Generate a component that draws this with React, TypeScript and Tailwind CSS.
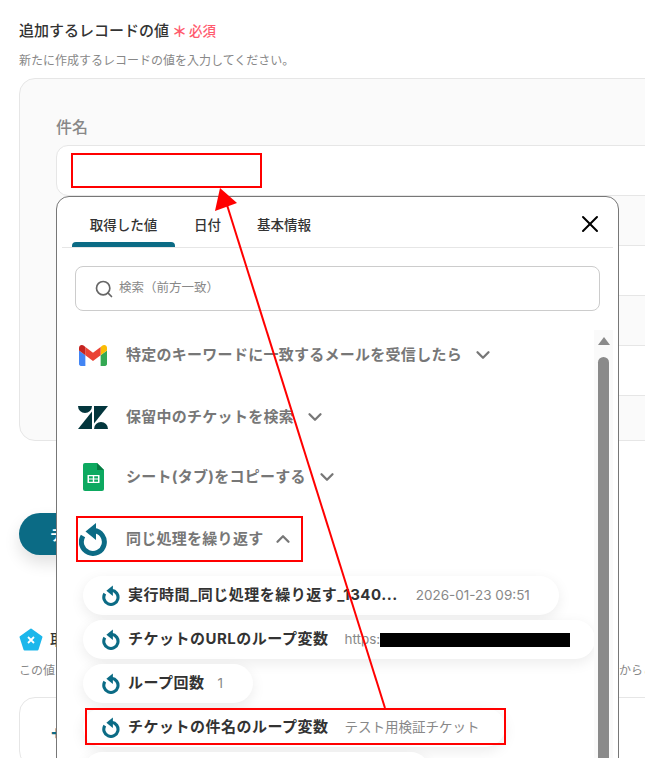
import React from 'react';
import { ChevronDown, ChevronUp, Search, X } from 'lucide-react';

const FONT = 'font-[Inter,"Noto_Sans_CJK_JP",sans-serif]';

const LoopIcon: React.FC<{ className?: string }> = ({ className }) => (
  <svg viewBox="0 0 28 34" className={className}>
    <path d="M15 8.500A11.500 11.500 0 1 1 4 14" fill="none" stroke="#0b6b85" strokeWidth="5" />
    <path d="M6.500 9.500 17 1v17z" fill="#0b6b85" />
  </svg>
);

const GmailIcon = () => (
  <svg viewBox="52 42 88 66" className="w-[28px] h-[21px]">
    <path fill="#4285f4" d="M58 108h14V74L52 59v43c0 3.32 2.69 6 6 6" />
    <path fill="#34a853" d="M120 108h14c3.32 0 6-2.69 6-6V59l-20 15" />
    <path fill="#fbbc04" d="M120 48v26l20-15v-8c0-7.42-8.47-11.65-14.4-7.2" />
    <path fill="#ea4335" d="M72 74V48l24 18 24-18v26L96 92" />
    <path fill="#c5221f" d="M52 51v8l20 15V48l-5.6-4.2c-5.94-4.45-14.4-.22-14.4 7.2" />
  </svg>
);

const ZendeskIcon = () => (
  <svg viewBox="0 0 30 23" className="w-[30px] h-[23px]">
    <path fill="#03363d" d="M0 0h14a7 7 0 0 1-14 0z" />
    <path fill="#03363d" d="M14 5.500V23H0z" />
    <path fill="#03363d" d="M16 0h14L16 17.500z" />
    <path fill="#03363d" d="M16 23a7 7 0 0 1 14 0z" />
  </svg>
);

const SheetsIcon = () => (
  <svg viewBox="0 0 21 28" className="w-[21px] h-[28px]">
    <path fill="#0da960" d="M2 0h12l7 7v19a2 2 0 0 1-2 2H2a2 2 0 0 1-2-2V2a2 2 0 0 1 2-2z" />
    <path fill="#067a42" d="M14 0l7 7h-7z" />
    <path fill="#fff" d="M4.500 12h12v8h-12zM6 13.300v2.100h3.800v-2.100zm5.200 0v2.100H15v-2.100zM6 16.600v2.100h3.800v-2.100zm5.200 0v2.100H15v-2.100z" fillRule="evenodd" />
  </svg>
);

const Group: React.FC<{
  icon: React.ReactNode;
  label: string;
  open?: boolean;
  className?: string;
}> = ({ icon, label, open, className }) => (
  <div className={`flex items-center h-[40px] ${className ?? ''}`}>
    <div className="w-[30px] flex justify-center">{icon}</div>
    <span className="ml-[18px] text-[15px] tracking-[0.27px] font-bold text-[#777777]">{label}</span>
    {open ? (
      <ChevronUp className="ml-[9px] w-[22px] h-[22px] text-[#777777]" strokeWidth={2.5} />
    ) : (
      <ChevronDown className="ml-[10px] w-[22px] h-[22px] text-[#777777]" strokeWidth={2.5} />
    )}
  </div>
);

const Pill: React.FC<{ label: string; value?: React.ReactNode; className: string }> = ({
  label,
  value,
  className,
}) => (
  <div
    className={`flex items-center h-[39px] pl-[19px] rounded-full bg-white shadow-[0_4px_14px_rgba(0,0,0,0.08)] ${className}`}
  >
    <LoopIcon className="w-[18px] h-[21px] shrink-0" />
    <span className="ml-[8px] text-[15px] tracking-[0.5px] font-bold text-[#333333] whitespace-nowrap">{label}</span>
    {value}
  </div>
);

const Annotations = () => (
  <>
    <div className="absolute left-[71px] top-[153px] w-[191px] h-[35px] border-2 border-[#ff0000]" />
    <div className="absolute left-[76px] top-[516px] w-[227px] h-[46px] border-2 border-[#ff0000]" />
    <div className="absolute left-[85px] top-[708px] w-[421px] h-[37px] border-2 border-[#ff0000]" />
    <svg className="absolute left-0 top-0 w-[645px] h-[758px] pointer-events-none" viewBox="0 0 645 758">
      <line x1="385" y1="708" x2="227" y2="205" stroke="#ff0000" strokeWidth="2" />
      <path d="M220 188 237 203 215 211z" fill="#ff0000" />
    </svg>
  </>
);

const App: React.FC = () => {
  return (
    <div className={`relative w-[645px] h-[758px] overflow-hidden bg-white ${FONT}`}>
      <div className="w-[900px] pl-[19px] pt-[21px]">
        <div className="flex items-center h-[20px]">
          <span className="text-[15px] font-medium text-[#333333]">追加するレコードの値</span>
          <span className="ml-[3px] text-[15px] font-bold leading-none text-[#ff5a6e]">＊</span>
          <span className="ml-[2px] text-[13.500px] font-medium text-[#ff5a6e]">必須</span>
        </div>
        <p className="mt-[11px] text-[12px] leading-[18px] text-[#888888]">
          新たに作成するレコードの値を入力してください。
        </p>
        <div className="mt-[8px] h-[363px] pl-[36px] pt-[36px] rounded-2xl border border-[#e6e6e6] bg-[#fafafa]">
          <div className="text-[16px] font-medium leading-[24px] text-[#888888]">件名</div>
          <div className="mt-[6px] h-[51px] rounded-xl border border-[#e6e6e6] bg-white" />
          <div className="mt-[49px] h-[51px] border border-[#e6e6e6] bg-white" />
          <div className="mt-[49px] h-[51px] border border-[#e6e6e6] bg-white" />
        </div>
        <button className="mt-[72px] w-[200px] h-[42px] rounded-full bg-[#0b6b85] pl-[31px] text-left text-[14px] font-bold text-white shadow-[0_8px_16px_rgba(0,0,0,0.12)]">
          テスト
        </button>
        <div className="mt-[73px] flex items-center h-[24px]">
          <svg viewBox="0 0 24 24" className="w-[24px] h-[24px]">
            <path
              d="M12 1.500 22.500 9 18.500 21.500H5.500L1.500 9z"
              fill="#1cb7eb"
              stroke="#1cb7eb"
              strokeWidth="2"
              strokeLinejoin="round"
            />
            <path d="M9 9l6 6M15 9l-6 6" stroke="#fff" strokeWidth="1.800" />
          </svg>
          <span className="ml-[7px] text-[15px] font-medium text-[#333333]">取得した値</span>
        </div>
        <div className="mt-[10px] flex text-[12px] leading-[18px] text-[#888888]">
          <span className="w-[600px]">この値</span>
          <span>からこ</span>
        </div>
        <div className="mt-[17px] h-[70px] pl-[30px] flex items-center rounded-2xl border border-[#e6e6e6] bg-white">
          <span className="text-[20px] font-bold text-[#0b6b85]">+</span>
        </div>
      </div>

      <div className="absolute left-[56px] top-[196px] w-[563px] h-[600px] rounded-t-[13px] border border-[#777777] bg-white">
        <div className="mx-[5px] h-[51px] flex items-start border-b border-[#e6e6e6] relative">
          <div className="relative ml-[10px] w-[103px] h-[50px] pt-[18px] text-center text-[13.500px] font-medium text-[#333333]">
            取得した値
            <div className="absolute left-0 bottom-0 w-full h-[5px] rounded-t-[4px] bg-[#0b6b85]" />
          </div>
          <div className="pt-[18px] px-[19px] text-[13.500px] font-medium text-[#333333]">日付</div>
          <div className="pt-[18px] px-[17px] text-[13.500px] font-medium text-[#333333]">基本情報</div>
          <X className="absolute right-[9px] top-[13px] w-[28px] h-[28px] text-black" strokeWidth={1.7} />
        </div>
        <div className="mx-[18px] mt-[18px] w-[525px] h-[45px] flex items-center pl-[18px] rounded-lg border border-[#cccccc]">
          <Search className="w-[20px] h-[20px] text-[#666666]" strokeWidth={2} />
          <span className="ml-[5px] text-[12.500px] text-[#888888]">検索（前方一致）</span>
        </div>
        <div className="pl-[21px] pt-[24px]">
          <Group icon={<GmailIcon />} label="特定のキーワードに一致するメールを受信したら" />
          <Group icon={<ZendeskIcon />} label="保留中のチケットを検索" className="mt-[22px]" />
          <Group icon={<SheetsIcon />} label="シート(タブ)をコピーする" className="mt-[20px]" />
          <Group icon={<LoopIcon className="w-[28px] h-[34px]" />} label="同じ処理を繰り返す" open className="mt-[22px]" />
        </div>
        <div className="pl-[26px] pt-[17px] flex flex-col gap-[5px]">
          <Pill
            className="w-[476px]"
            label="実行時間_同じ処理を繰り返す_1340..."
            value={<span className="ml-[18px] text-[13.500px] text-[#888888] whitespace-nowrap">2026-01-23 09:51</span>}
          />
          <Pill
            className="w-[512px]"
            label="チケットのURLのループ変数"
            value={
              <span className="ml-[16px] flex items-center text-[13.500px] text-[#888888]">
                https:<span className="block w-[190px] h-[14px] bg-black" />
              </span>
            }
          />
          <Pill
            className="w-[170px]"
            label="ループ回数"
            value={<span className="ml-[13px] text-[13.500px] text-[#888888]">1</span>}
          />
          <Pill
            className="w-[422px]"
            label="チケットの件名のループ変数"
            value={<span className="ml-[16px] text-[13.500px] text-[#888888]">テスト用検証チケット</span>}
          />
          <div className="w-[347px] h-[39px] rounded-full bg-white shadow-[0_4px_14px_rgba(0,0,0,0.08)]" />
        </div>
        <div className="absolute left-[537px] top-[133px] w-[19px] h-[470px] bg-[#fafafa] flex flex-col items-center pt-[7px]">
          <div className="w-0 h-0 border-x-[6px] border-x-transparent border-b-[8px] border-b-[#8a8a8a]" />
          <div className="mt-[12px] w-[11px] flex-1 rounded-t-full bg-[#8a8a8a]" />
        </div>
      </div>

      <Annotations />
    </div>
  );
};

export default App;
